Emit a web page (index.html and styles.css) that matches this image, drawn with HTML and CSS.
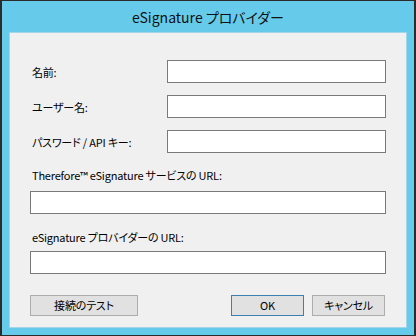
FILE: index.html
```html
<!DOCTYPE html>
<html lang="ja">
<head>
<meta charset="utf-8">
<title>eSignature プロバイダー</title>
<link rel="stylesheet" href="styles.css">
</head>
<body>
<div class="window">
  <div class="titlebar">eSignature プロバイダー</div>
  <div class="content">
    <div class="grid">
      <label class="label">名前:</label>
      <div class="field"></div>
      <label class="label">ユーザー名:</label>
      <div class="field"></div>
      <label class="label">パスワード / API キー:</label>
      <div class="field"></div>
    </div>
    <div class="url-label url-label-first">Therefore™ eSignature サービスの URL:</div>
    <div class="field"></div>
    <div class="url-label url-label-second">eSignature プロバイダーの URL:</div>
    <div class="field"></div>
    <div class="buttons">
      <button class="btn btn-test">接続のテスト</button>
      <div class="spacer"></div>
      <button class="btn btn-default">OK</button>
      <button class="btn">キャンセル</button>
    </div>
  </div>
</div>
</body>
</html>
```

FILE: styles.css
```css
html, body {
  margin: 0;
  padding: 0;
}
body {
  font-family: "Noto Sans CJK JP", "Noto Sans", sans-serif;
  font-size: 11px;
  letter-spacing: -0.2px;
  font-feature-settings: "palt";
  color: #000;
}
.window {
  width: 416px;
  height: 336px;
  box-sizing: border-box;
  background: #66cbea;
  border-style: solid;
  border-color: #2b2b2b;
  border-width: 1px 2px 1px 2px;
  display: flex;
  flex-direction: column;
}
.titlebar {
  height: 31px;
  line-height: 32px;
  text-align: center;
  font-size: 14px;
  letter-spacing: 0;
  color: #111;
}
.content {
  margin: 0 7px;
  height: 296px;
  box-sizing: border-box;
  background: #f0f0f0;
  border: 1px solid #a4d6ea;
  padding: 0 20px;
  display: flex;
  flex-direction: column;
}
.grid {
  margin-top: 27px;
  display: grid;
  grid-template-columns: 135px 1fr;
  grid-auto-rows: 23px;
  row-gap: 12px;
  padding-left: 2px;
}
.label {
  display: flex;
  align-items: center;
  line-height: 16px;
  white-space: nowrap;
}
.field {
  height: 23px;
  box-sizing: border-box;
  background: #fff;
  border: 1px solid #7a7a7a;
}
.url-label {
  line-height: 16px;
  padding-left: 2px;
  white-space: nowrap;
}
.url-label-first {
  margin-top: 14px;
  margin-bottom: 8px;
}
.url-label-second {
  margin-top: 15px;
  margin-bottom: 6px;
}
.buttons {
  margin-top: 21px;
  display: flex;
  gap: 8px;
  padding-right: 1px;
}
.spacer {
  flex: 1;
}
.btn {
  width: 73px;
  height: 21px;
  box-sizing: border-box;
  padding: 0;
  margin: 0;
  background: #e1e1e1;
  border: 1px solid #adadad;
  font-family: "Noto Sans CJK JP", "Noto Sans", sans-serif;
  font-feature-settings: "palt";
  font-size: 11px;
  letter-spacing: -0.2px;
  color: #000;
  line-height: 19px;
}
.btn-test {
  width: 108px;
}
.btn-default {
  border-color: #3c7fb1;
}
```
